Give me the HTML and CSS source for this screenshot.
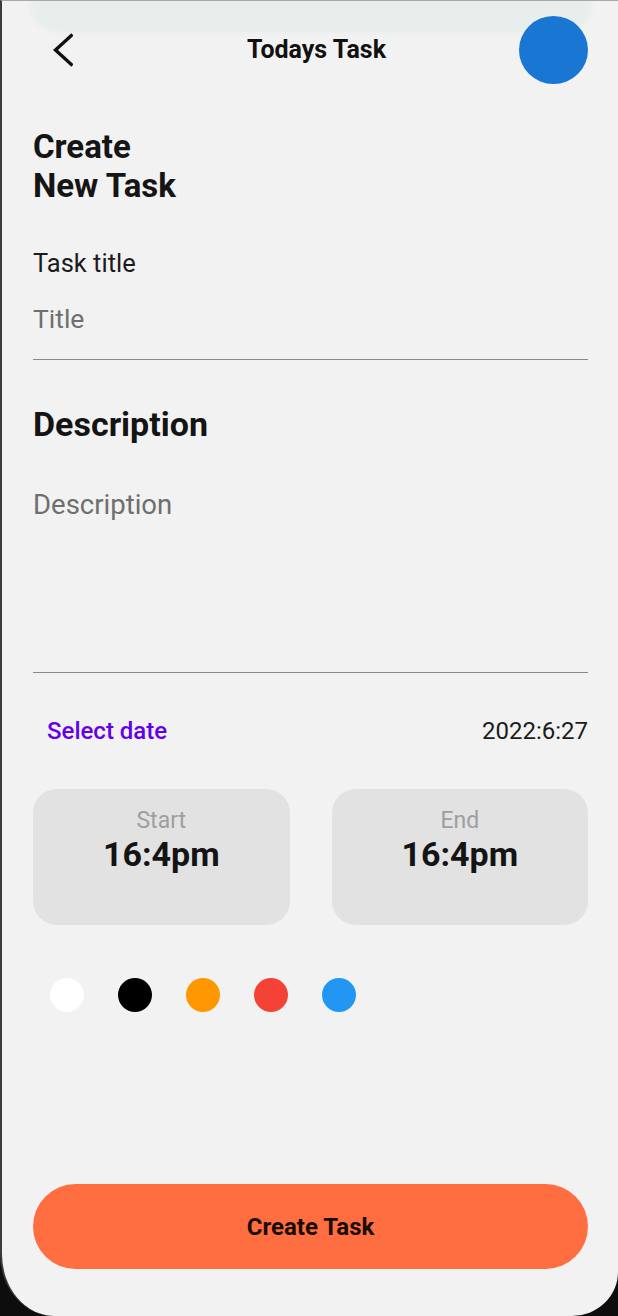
FILE: index.html
```html
<!DOCTYPE html>
<html lang="en">
<head>
<meta charset="utf-8">
<title>Create New Task</title>
<link rel="stylesheet" href="styles.css">
</head>
<body>
<div class="screen">
  <header class="header">
    <button class="back" aria-label="Back">
      <svg width="40" height="68" viewBox="0 0 40 68"><polyline points="39.5,18.5 22.5,34 39.5,49.5" fill="none" stroke="#111" stroke-width="3.4"/></svg>
    </button>
    <h1 class="header-title">Todays Task</h1>
    <div class="avatar"></div>
  </header>

  <h2 class="page-title">Create<br>New Task</h2>

  <label class="field-label">Task title</label>
  <div class="field field-title"><span class="placeholder">Title</span></div>

  <h3 class="section-title">Description</h3>
  <div class="field field-desc"><span class="placeholder placeholder-desc">Description</span></div>

  <div class="date-row">
    <span class="select-date">Select date</span>
    <span class="date-value">2022:6:27</span>
  </div>

  <div class="times">
    <div class="time-card">
      <span class="time-label">Start</span>
      <span class="time-value">16:4pm</span>
    </div>
    <div class="time-card">
      <span class="time-label">End</span>
      <span class="time-value">16:4pm</span>
    </div>
  </div>

  <div class="colors">
    <span class="dot dot-white"></span>
    <span class="dot dot-black"></span>
    <span class="dot dot-orange"></span>
    <span class="dot dot-red"></span>
    <span class="dot dot-blue"></span>
  </div>

  <button class="create-btn">Create Task</button>
</div>
</body>
</html>
```

FILE: styles.css
```css
* { box-sizing: border-box; }
html, body { margin: 0; padding: 0; }
body {
  background: #0d0d0d;
  font-family: Roboto, "Noto Sans", "Liberation Sans", sans-serif;
  color: #111;
}
.screen {
  position: relative;
  width: 618px;
  height: 1316px;
  background: #f2f2f2;
  border-left: 2px solid #3c3c3c;
  border-top: 1px solid #a8a8a8;
  border-radius: 0 0 46px 54px / 0 0 44px 62px;
  padding: 0 30px 47px 31px;
  display: flex;
  flex-direction: column;
  overflow: hidden;
}
.screen::before {
  content: "";
  position: absolute;
  left: 28px;
  right: 26px;
  top: -6px;
  height: 38px;
  background: #e7eeeb;
  border-radius: 0 0 30px 30px;
  filter: blur(2px);
}
.header {
  position: relative;
  margin-top: 15px;
  height: 68px;
  display: grid;
  grid-template-columns: 1fr auto 1fr;
  align-items: center;
}
.back {
  justify-self: start;
  width: 40px;
  height: 68px;
  padding: 0;
  border: 0;
  background: none;
  display: block;
}
.back svg { display: block; }
.header-title {
  margin: 0;
  padding-left: 12px;
  font-size: 25px;
  font-weight: 700;
  line-height: 30px;
  color: #111;
}
.avatar {
  justify-self: end;
  width: 69px;
  height: 68px;
  border-radius: 50%;
  background: #1976d2;
}
.page-title {
  margin: 43px 0 0;
  font-size: 33px;
  line-height: 39px;
  font-weight: 700;
  color: #151515;
}
.field-label {
  margin-top: 43px;
  font-size: 25.5px;
  line-height: 30px;
  color: #1c1c1c;
}
.field {
  border-bottom: 1.5px solid #8a8a8a;
}
.placeholder {
  display: block;
  font-size: 26.5px;
  line-height: 30px;
  color: #6f6f6f;
}
.placeholder-desc {
  font-size: 27.5px;
}
.field-title {
  margin-top: 26px;
  padding-bottom: 25px;
}
.section-title {
  margin: 44px 0 0;
  font-size: 34px;
  line-height: 40px;
  font-weight: 700;
  color: #141414;
}
.field-desc {
  margin-top: 46px;
  padding-bottom: 152px;
}
.date-row {
  margin-top: 44px;
  display: flex;
  justify-content: space-between;
  align-items: center;
  padding-left: 14px;
  font-size: 24px;
  line-height: 28px;
}
.select-date {
  color: #6200ee;
  font-weight: 500;
}
.date-value {
  color: #1c1c1c;
}
.times {
  margin-top: 44px;
  display: grid;
  grid-template-columns: 1fr 1fr;
  gap: 42px;
}
.time-card {
  height: 136px;
  border-radius: 24px;
  background: #e2e2e2;
  padding-top: 18px;
  display: flex;
  flex-direction: column;
  align-items: center;
}
.time-label {
  font-size: 23px;
  line-height: 27px;
  color: #9e9e9e;
}
.time-value {
  font-size: 34px;
  line-height: 40px;
  font-weight: 700;
  color: #141414;
}
.colors {
  margin-top: 53px;
  padding-left: 17px;
  display: flex;
  gap: 34px;
}
.dot {
  width: 34px;
  height: 34px;
  border-radius: 50%;
}
.dot-white { background: #ffffff; }
.dot-black { background: #000000; }
.dot-orange { background: #ff9800; }
.dot-red { background: #f44336; }
.dot-blue { background: #2196f3; }
.create-btn {
  margin-top: auto;
  height: 85px;
  width: 100%;
  border: 0;
  border-radius: 43px;
  background: #ff6e40;
  font-family: inherit;
  font-size: 24px;
  font-weight: 700;
  color: #1a0c05;
}
```
